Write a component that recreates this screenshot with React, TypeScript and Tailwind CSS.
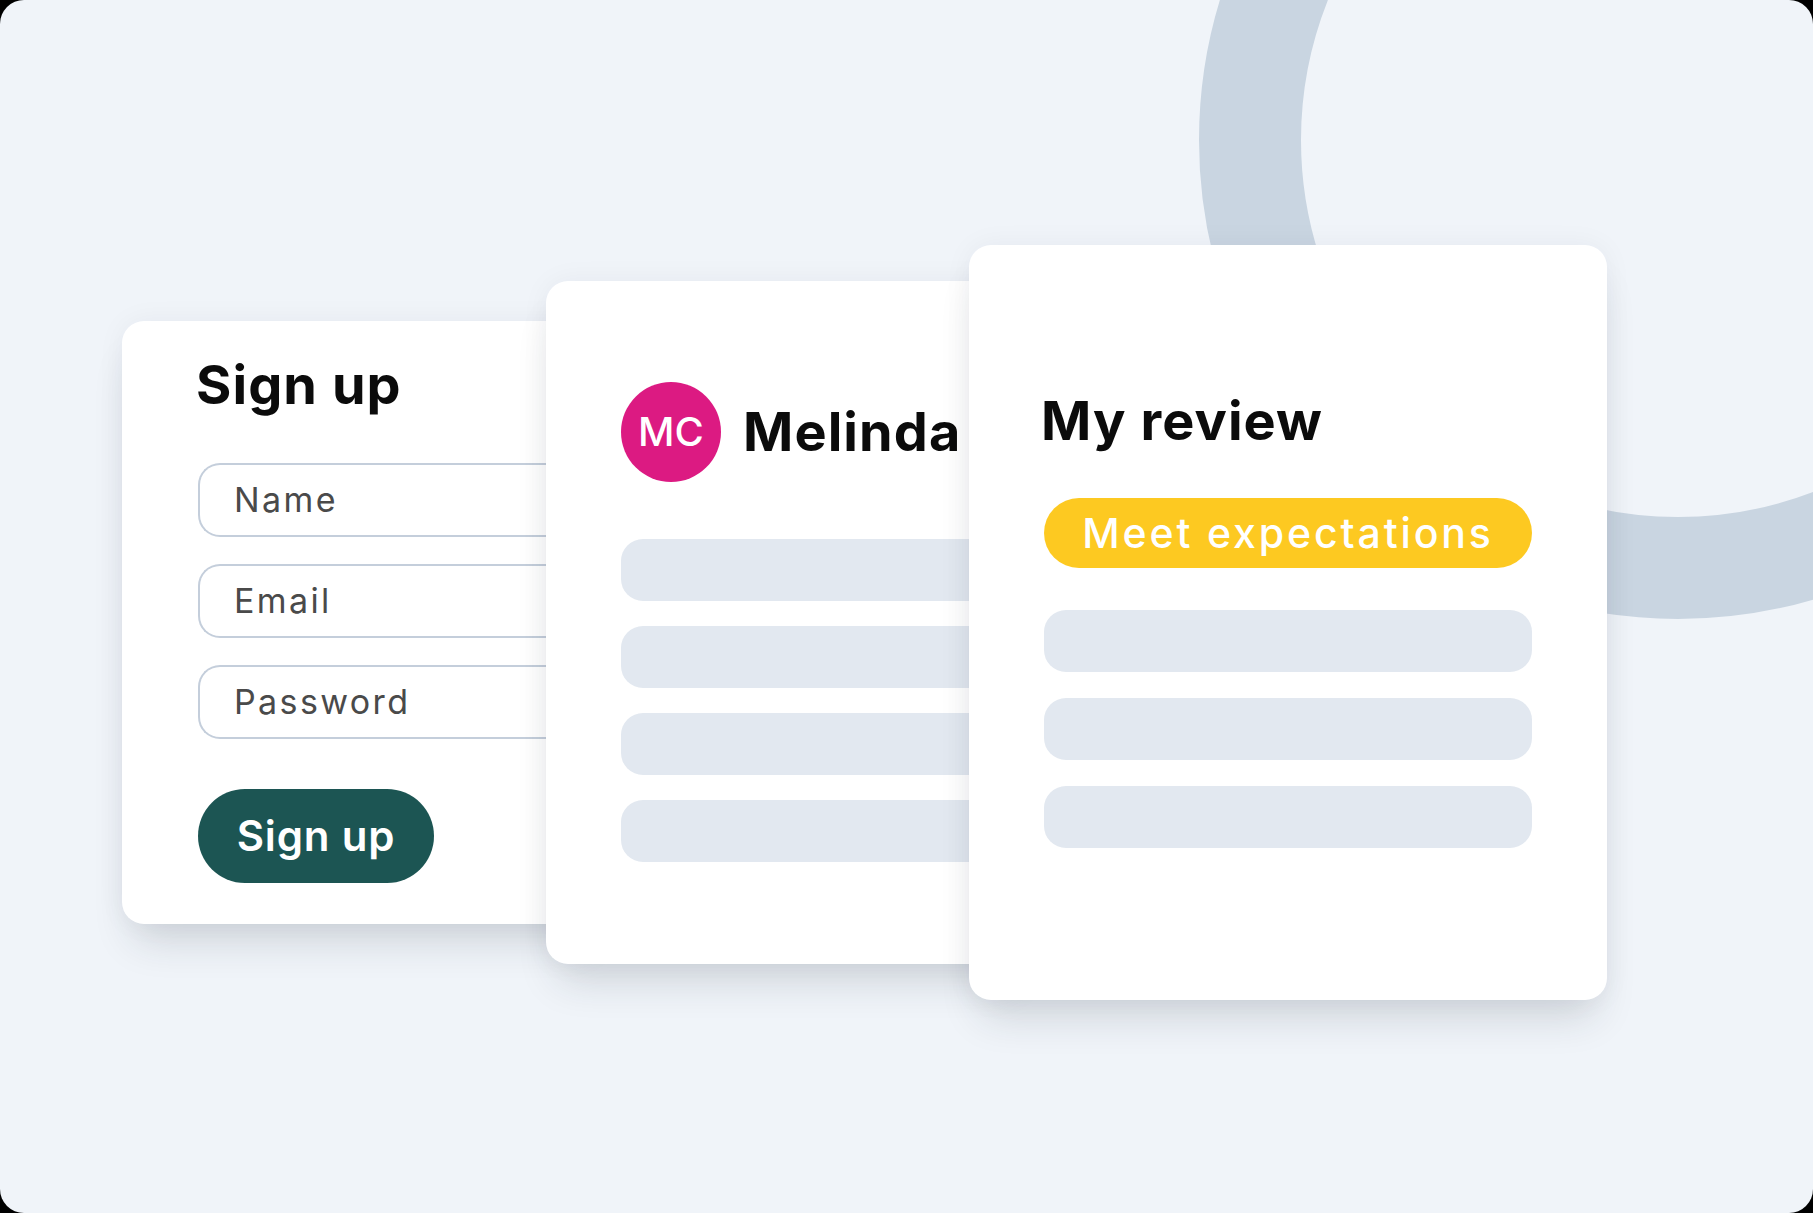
import React from "react"

const cardShadow = "shadow-[0_28px_40px_-12px_rgba(30,41,59,0.16),0_0_28px_rgba(30,41,59,0.05)]"

const Bar = ({ className = "" }: { className?: string }) => (
   <div className={`h-[62px] rounded-[22px] bg-[#e2e8f0] ${className}`} />
)

const SignUpCard = () => {
   const fields = ["Name", "Email", "Password"]
   return (
      <section className={`mt-[321px] w-[480px] h-[603px] shrink-0 rounded-[22px] bg-white pl-[76px] pt-[37px] flex flex-col ${cardShadow}`}>
         <h2 className="-ml-[2px] text-[54px] leading-none font-bold text-[#0b0b0b] tracking-[0.02em]">Sign up</h2>
         <div className="mt-[51px] flex flex-col gap-[27px]">
            {fields.map(f => (
               <div
                  key={f}
                  className="h-[74px] rounded-l-[22px] border-2 border-r-0 border-[#c4cedb] pl-[34px] flex items-center text-[34px] leading-none tracking-[0.07em] text-[#4a4a4a]"
               >
                  {f}
               </div>
            ))}
         </div>
         <button className="mt-[50px] w-[236px] h-[94px] rounded-full bg-[#1c5553] text-white text-[42px] leading-none font-semibold tracking-[0.02em] flex items-center justify-center">
            Sign up
         </button>
      </section>
   )
}

const ProfileCard = () => (
   <section className={`relative ml-[-56px] mt-[281px] w-[480px] h-[683px] shrink-0 rounded-[22px] bg-white pl-[75px] pt-[101px] flex flex-col ${cardShadow}`}>
      <div className="flex items-center gap-[22px]">
         <div className="w-[100px] h-[100px] rounded-full bg-[#dc1a82] flex items-center justify-center text-white text-[40px] leading-none font-medium">
            MC
         </div>
         <span className="text-[54px] leading-none font-bold text-[#0b0b0b] tracking-[0.02em]">Melinda</span>
      </div>
      <div className="mt-[57px] flex flex-col gap-[25px]">
         <Bar />
         <Bar />
         <Bar />
         <Bar />
      </div>
   </section>
)

const ReviewCard = () => (
   <section className={`relative ml-[-57px] mt-[245px] w-[638px] h-[755px] shrink-0 rounded-[22px] bg-white px-[75px] pt-[149px] flex flex-col ${cardShadow}`}>
      <h2 className="-ml-[3px] text-[54px] leading-none font-bold text-[#0b0b0b] tracking-[0.02em]">My review</h2>
      <div className="mt-[50px] h-[70px] rounded-full bg-[#fdc921] flex items-center justify-center text-white text-[41px] leading-none font-medium tracking-[0.07em]">
         Meet expectations
      </div>
      <div className="mt-[42px] flex flex-col gap-[26px]">
         <Bar />
         <Bar />
         <Bar />
      </div>
   </section>
)

export default function App() {
   return (
      <div className="w-[1813px] h-[1213px] bg-black" style={{ fontFamily: "Inter, 'Liberation Sans', sans-serif" }}>
         <main className="relative w-full h-full rounded-[24px] overflow-hidden bg-[#f0f4f9]">
            {/* decorative ring behind the cards */}
            <div className="absolute left-[1199px] top-[-339px] w-[958px] h-[958px] rounded-full border-[102px] border-[#c9d5e1]" />
            <div className="relative flex items-start pl-[122px]">
               <SignUpCard />
               <ProfileCard />
               <ReviewCard />
            </div>
         </main>
      </div>
   )
}
